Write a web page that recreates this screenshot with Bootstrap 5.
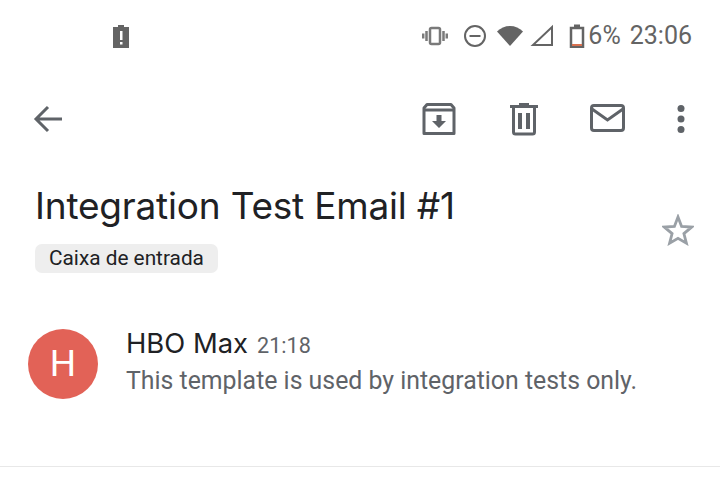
<!DOCTYPE html>
<html>
<head>
    <title>Integration Test Email</title>
    <link rel="stylesheet" href="https://cdn.jsdelivr.net/npm/bootstrap@5.3.0/dist/css/bootstrap.min.css">
    <style>
        body 
        {
            width: 720px;
            height: 490px;
            overflow: hidden;
            background-color: #fff;
            font-family: Roboto, "Liberation Sans", sans-serif;
        }

        /*Status Bar*/
        .status-strip 
        {
            height: 71px;
            padding: 0 28px 0 112px;
            color: #646464;
        }

        .status-pct 
        {
            font-size: 25px;
            line-height: 28px;
            margin-left: 3px;
        }

        .status-clock 
        {
            font-size: 25px;
            line-height: 28px;
            margin-left: 9px;
        }

        /*Action Bar*/
        .action-strip 
        {
            height: 95px;
            padding: 0 34px 0 33px;
        }

        .subject-area 
        {
            padding: 0 26px 0 35px;
            height: 122px;
        }

        .subject-text 
        {
            font-family: Inter, Roboto, sans-serif;
            font-size: 37px;
            font-weight: 400;
            letter-spacing: -0.2px;
            line-height: 44px;
            color: #202124;
            margin: 18px 0 0;
        }

        .inbox-tag 
        {
            display: inline-block;
            margin-top: 16px;
            background-color: #eeeeee;
            border-radius: 7px;
            padding: 0 14px;
            height: 29px;
            line-height: 28px;
            font-size: 20.8px;
            color: #202124;
        }

        .sender-row 
        {
            padding: 0 28px;
            margin-top: 41px;
        }

        .avatar-circle 
        {
            width: 70px;
            height: 70px;
            border-radius: 50%;
            background-color: #e26257;
            color: #fff;
            font-size: 37px;
            line-height: 70px;
            text-align: center;
            margin-right: 29px;
            flex-shrink: 0;
        }

        .sender-name 
        {
            font-family: Inter, Roboto, sans-serif;
            font-size: 27.4px;
            line-height: 30px;
            color: #202124;
        }

        .sender-time 
        {
            font-size: 21.6px;
            color: #5f6368;
            margin-left: 9px;
        }

        .sender-snippet 
        {
            font-size: 24.85px;
            line-height: 30px;
            color: #5f6368;
            margin-top: 3px;
        }

        .sender-copy 
        {
            margin: -4px 0 0 -1px;
        }

        .bottom-rule 
        {
            border-top: 1px solid #e8e8e8;
            margin-top: 67px;
        }
    </style>
</head>
<body>

    <!--Status Bar-->
    <div class="status-strip d-flex align-items-center">
        <svg width="18" height="24" viewBox="0 0 18 24"><path fill="#646464" d="M6 1h6v2h5v21H1V3h5z"/><rect x="8" y="7" width="2.500" height="9" fill="#fff"/><rect x="8" y="18" width="2.500" height="2.500" fill="#fff"/></svg>
        <div class="d-flex align-items-center ms-auto">
            <svg width="26" height="20" viewBox="0 0 26 20" fill="none" stroke="#7a7a7a" stroke-width="2.500"><rect x="8" y="2" width="10" height="16" rx="1.500"/><path d="M4.500 5v10M1.200 7.500v5M21.500 5v10M24.800 7.500v5"/></svg>
            <svg style="margin-left:15px" width="24" height="24" viewBox="0 0 24 24" fill="none" stroke="#646464" stroke-width="2"><circle cx="12" cy="12" r="10"/><path d="M6.500 12h11"/></svg>
            <svg style="margin-left:9px" width="28" height="22" viewBox="0 0 28 22"><path fill="#646464" d="M1 6.500C4.500 3 9 1 14 1s9.500 2 13 5.500L14 21z"/></svg>
            <svg style="margin-left:6px" width="24" height="24" viewBox="0 0 24 24" fill="none" stroke="#646464" stroke-width="2"><path d="M22 3v18H3z"/></svg>
            <svg style="margin-left:15px" width="16" height="24" viewBox="0 0 16 24"><path fill="none" stroke="#646464" stroke-width="2.500" d="M2 4h12v19H2z"/><rect x="5" y="0.500" width="6" height="3" fill="#646464"/><rect x="3" y="20" width="10" height="2" fill="#d9714f"/></svg>
            <span class="status-pct">6%</span>
            <span class="status-clock">23:06</span>
        </div>
    </div>

    <!--Action Bar-->
    <div class="action-strip d-flex align-items-center">
        <svg width="30" height="30" viewBox="0 0 30 30" fill="none" stroke="#5f6368" stroke-width="3"><path d="M29 15H3M15 3L3 15l12 12"/></svg>
        <div class="d-flex align-items-center ms-auto">
            <svg width="34" height="34" viewBox="0 0 34 34"><path fill="none" stroke="#5f6368" stroke-width="3" stroke-linejoin="round" d="M5 2.500h24l3 3.500v25.500H2V6z"/><path fill="none" stroke="#5f6368" stroke-width="3" d="M2 8h30"/><path fill="#5f6368" d="M14.500 13h5v6H24l-7 7-7-7h4.500z"/></svg>
            <svg style="margin-left:53px" width="30" height="34" viewBox="0 0 30 34"><path fill="#5f6368" d="M10 1h10v2h9v3H1V3h9z"/><path fill="none" stroke="#5f6368" stroke-width="3" d="M4.500 6v24a2 2 0 0 0 2 2h17a2 2 0 0 0 2-2V6"/><rect x="9" y="11" width="4" height="16" fill="#5f6368"/><rect x="17" y="11" width="4" height="16" fill="#5f6368"/></svg>
            <svg style="margin-left:51px" width="36" height="30" viewBox="0 0 36 30"><rect x="1.500" y="1.500" width="32" height="25" rx="2.500" fill="none" stroke="#5f6368" stroke-width="3"/><path fill="none" stroke="#5f6368" stroke-width="3" d="M2 5l15.500 11L33 5"/></svg>
            <svg style="margin-left:50px" width="10" height="30" viewBox="0 0 10 30"><circle cx="5" cy="4.500" r="3.500" fill="#5f6368"/><circle cx="5" cy="15" r="3.500" fill="#5f6368"/><circle cx="5" cy="25.500" r="3.500" fill="#5f6368"/></svg>
        </div>
    </div>

    <!--Subject-->
    <div class="subject-area d-flex justify-content-between">
        <div>
            <h1 class="subject-text">Integration Test Email #1</h1>
            <span class="inbox-tag">Caixa de entrada</span>
        </div>
        <svg class="align-self-start" style="margin-top:48px" width="32" height="32" viewBox="0 0 32 32"><path fill="none" stroke="#9aa0a6" stroke-width="2.800" stroke-linejoin="miter" d="M16 3l3.600 9.400 10 .7-7.700 6.500 2.500 9.600L16 24.400l-8.400 4.800 2.500-9.600-7.700-6.500 10-.7z"/></svg>
    </div>

    <!--Sender-->
    <div class="sender-row d-flex align-items-center">
        <div class="avatar-circle">H</div>
        <div class="sender-copy">
            <div class="d-flex align-items-baseline">
                <span class="sender-name">HBO Max</span>
                <span class="sender-time">21:18</span>
            </div>
            <div class="sender-snippet">This template is used by integration tests only.</div>
        </div>
    </div>

    <div class="bottom-rule"></div>

    <script src="https://cdn.jsdelivr.net/npm/bootstrap@5.3.0/dist/js/bootstrap.bundle.min.js"></script>
</body>
</html>
